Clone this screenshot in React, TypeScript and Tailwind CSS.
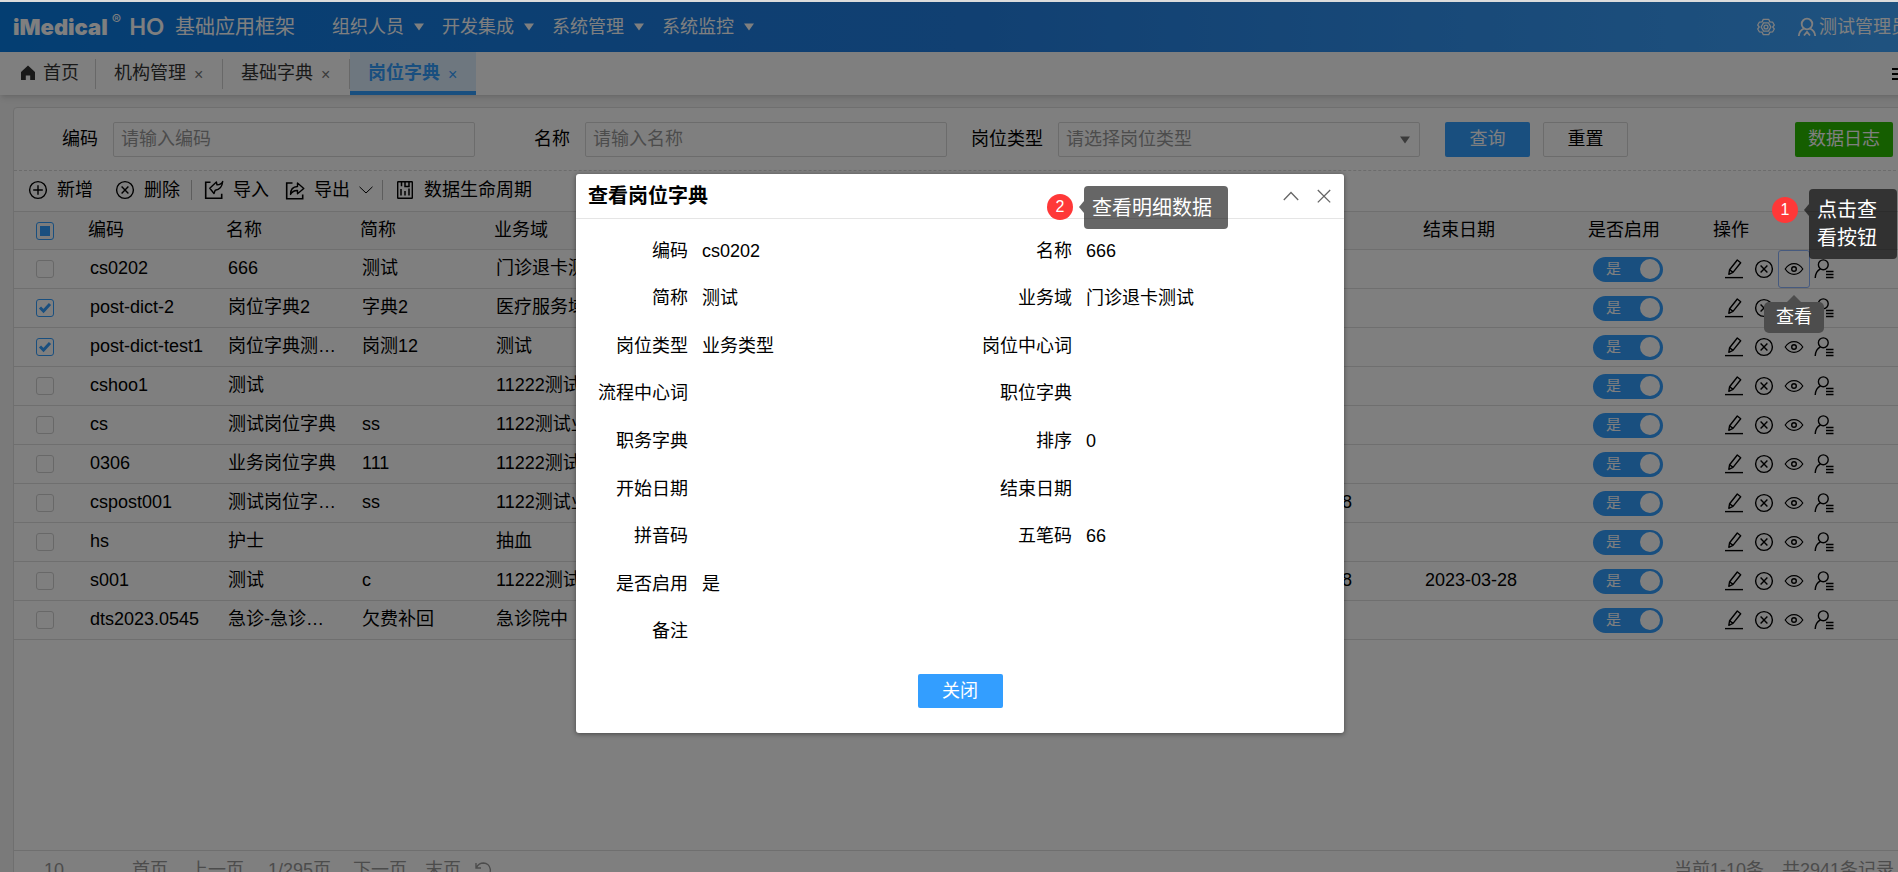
import type { ReactNode } from "react";

type Row = {
  code: string;
  name: string;
  short: string;
  domain: string;
  start?: string;
  end?: string;
  checked?: boolean;
};

const rows: Row[] = [
  { code: "cs0202", name: "666", short: "测试", domain: "门诊退卡测试" },
  { code: "post-dict-2", name: "岗位字典2", short: "字典2", domain: "医疗服务域", checked: true },
  { code: "post-dict-test1", name: "岗位字典测…", short: "岗测12", domain: "测试", checked: true },
  { code: "cshoo1", name: "测试", short: "", domain: "11222测试" },
  { code: "cs", name: "测试岗位字典", short: "ss", domain: "1122测试业" },
  { code: "0306", name: "业务岗位字典", short: "111", domain: "11222测试" },
  { code: "cspost001", name: "测试岗位字…", short: "ss", domain: "1122测试业", start: "2023-03-28" },
  { code: "hs", name: "护士", short: "", domain: "抽血" },
  { code: "s001", name: "测试", short: "c", domain: "11222测试", start: "2023-03-28", end: "2023-03-28" },
  { code: "dts2023.0545", name: "急诊-急诊…", short: "欠费补回", domain: "急诊院中" },
];

const details: [string, string][] = [
  ["编码", "cs0202"],
  ["名称", "666"],
  ["简称", "测试"],
  ["业务域", "门诊退卡测试"],
  ["岗位类型", "业务类型"],
  ["岗位中心词", ""],
  ["流程中心词", ""],
  ["职位字典", ""],
  ["职务字典", ""],
  ["排序", "0"],
  ["开始日期", ""],
  ["结束日期", ""],
  ["拼音码", ""],
  ["五笔码", "66"],
  ["是否启用", "是"],
  ["", ""],
  ["备注", ""],
];

function Icon({ children, className = "size-5" }: { children: ReactNode; className?: string }) {
  return (
    <svg
      viewBox="0 0 20 20"
      className={`${className} shrink-0`}
      fill="none"
      stroke="currentColor"
      strokeWidth="1.4"
      aria-hidden="true"
    >
      {children}
    </svg>
  );
}

const PlusCircle = () => (
  <Icon>
    <circle cx="10" cy="10" r="8.4" />
    <path d="M10 5.2v9.6M5.2 10h9.6" />
  </Icon>
);

const CrossCircle = () => (
  <Icon>
    <circle cx="10" cy="10" r="8.4" />
    <path d="M6.6 6.600l6.800 6.800M13.400 6.600l-6.800 6.800" />
  </Icon>
);

const ImportIcon = () => (
  <Icon>
    <path d="M6.500 2.200H1.700v16h16v-4.500" strokeWidth="1.600" />
    <path
      d="M18.700 1.500c-.8 2-2.600 3.200-5.700 3.400l-.6-2.900-6.600 6.200 4.200 5.300 1.200-3.300c4.200-.5 7-3.700 7.500-8.700z"
      strokeLinejoin="round"
    />
  </Icon>
);

const ExportIcon = () => (
  <Icon>
    <path d="M7.500 3H1.700v15.700h16v-4.200" strokeWidth="1.600" />
    <path
      d="M5.500 14.500c0-5 2.700-7.800 7-8V3l6.300 5.500-6.300 5.300v-3.300c-3-.2-5.300 1-7 4z"
      strokeLinejoin="round"
    />
  </Icon>
);

const LifeIcon = () => (
  <Icon>
    <rect x="2.700" y="1.700" width="14.600" height="16.600" rx="0.5" />
    <path d="M6.500 1.700v4.600M6 9v6.500M10 11v4.500M14 8.500v7M10 2v4.500h4V2" strokeWidth="1.500" />
  </Icon>
);

const EditIcon = () => (
  <Icon>
    <path d="M1 18.600h18" />
    <path d="M4.800 15.300l.8-4.600 7.700-9.700 3.400 2.700-7.700 9.700zM5.600 10.700l3.400 2.700" strokeLinejoin="round" />
  </Icon>
);

const EyeIcon = () => (
  <Icon>
    <path d="M1.200 10C3.500 6.500 6.500 4.700 10 4.700s6.500 1.800 8.800 5.300c-2.300 3.500-5.300 5.300-8.800 5.300S3.500 13.500 1.200 10z" strokeWidth="1.200" />
    <circle cx="10" cy="10" r="2.300" />
  </Icon>
);

const PersonListIcon = () => (
  <Icon>
    <circle cx="9.300" cy="5.800" r="4.900" />
    <path d="M6.500 9.800C3 11.500 1.400 14.500 1.200 19M12 12.500h7.500M12 15.500h7.500M12 18.500h7.500" />
  </Icon>
);

const Caret = () => (
  <svg viewBox="0 0 10 8" className="h-2 w-2.5" fill="currentColor" aria-hidden="true">
    <path d="M0 .5h10L5 7.500z" />
  </svg>
);

function Check({ label, checked, partial }: { label: string; checked?: boolean; partial?: boolean }) {
  const on = checked || partial;
  return (
    <label className="relative ml-[22px] flex size-[18px]">
      <input
        type="checkbox"
        aria-label={label}
        defaultChecked={checked}
        className={`size-[18px] appearance-none rounded-[3px] border ${on ? "border-[#339eff]" : "border-[#d0d0d0]"}`}
      />
      {partial && <span className="absolute inset-1 bg-[#339eff]" />}
      {checked && (
        <svg viewBox="0 0 18 18" className="absolute inset-0" fill="none" stroke="#339eff" strokeWidth="3" aria-hidden="true">
          <path d="M4 8.500L7.500 12 14 5" />
        </svg>
      )}
    </label>
  );
}

function Switch({ label }: { label: string }) {
  return (
    <label className="ml-[3px] flex h-[25px] w-[70px] items-center justify-between rounded-full bg-[#339eff] pr-[3px] pl-[13px] text-[15px] leading-5 text-white">
      <input type="checkbox" role="switch" aria-label={label} defaultChecked className="sr-only" />
      是
      <span className="size-5 rounded-full bg-white" />
    </label>
  );
}

function Note({ n, children }: { n: number; children: ReactNode }) {
  return (
    <div className="flex items-start text-left text-xl leading-7 text-white">
      <div className="flex h-[42px] shrink-0 items-center">
        <span className="flex size-[26px] items-center justify-center rounded-full bg-[#ff3838] text-base leading-none">
          {n}
        </span>
        <svg viewBox="0 0 5 12" className="ml-1.5 h-3 w-[5px]" fill="#000" fillOpacity="0.6" aria-hidden="true">
          <path d="M5 0v12L0 6z" />
        </svg>
      </div>
      {children}
    </div>
  );
}

function ActionButton({ label, children }: { label: string; children: ReactNode }) {
  return (
    <button type="button" aria-label={label} className="flex h-9 w-[30px] items-center justify-center">
      {children}
    </button>
  );
}

function Actions({ active }: { active: boolean }) {
  return (
    <div className="flex">
      <ActionButton label="修改">
        <EditIcon />
      </ActionButton>
      <ActionButton label="删除">
        <CrossCircle />
      </ActionButton>
      {active ? (
        <div className="relative">
          <div className="rounded-xs outline outline-[#8cb4ff]">
            <ActionButton label="查看">
              <EyeIcon />
            </ActionButton>
          </div>
          <div className="absolute top-11 left-1/2 z-20 flex w-[60px] -translate-x-1/2 flex-col items-center">
            <svg viewBox="0 0 14 7" className="h-[7px] w-3.5" fill="#4d4d4d" aria-hidden="true">
              <path d="M7 0l7 7H0z" />
            </svg>
            <div role="tooltip" className="flex h-[31px] w-full items-center justify-center rounded-[5px] bg-[#4d4d4d] pb-0.5 text-lg text-white">
              查看
            </div>
          </div>
          <div className="absolute -top-[62px] -left-[7px] z-20 w-[125px]">
            <Note n={1}>
              <div className="w-[88px] shrink-0 rounded-[4px] bg-black/60 px-2 py-[7px]">点击查看按钮</div>
            </Note>
          </div>
        </div>
      ) : (
        <ActionButton label="查看">
          <EyeIcon />
        </ActionButton>
      )}
      <ActionButton label="人员">
        <PersonListIcon />
      </ActionButton>
    </div>
  );
}

function TopBar() {
  return (
    <header className="flex h-[50px] shrink-0 items-center bg-linear-to-r from-[#087ce4] via-[#2280e4] to-[#40a6ff] pr-[11px] pl-[13px] text-lg text-white">
      <div className="flex h-[26px] w-[162px] items-center font-['Inter']">
        <span className="text-[22px] font-black">iMedical</span>
        <sup className="ml-1 text-sm">®</sup>
        <span className="ml-auto pr-[11px] font-['Lato'] text-[22px] font-bold">HO</span>
      </div>
      <h1 className="text-xl">基础应用框架</h1>
      <nav className="ml-[37px] flex">
        {["组织人员", "开发集成", "系统管理", "系统监控"].map((item) => (
          <button key={item} type="button" className="flex w-[110px] items-center gap-2.5">
            {item}
            <Caret />
          </button>
        ))}
      </nav>
      <button type="button" aria-label="设置" className="ml-auto">
        <Icon className="size-[18px]">
          <path
            d="M7 1.500h6l1.300 2.800 3 .2 1.900 3.300L17.500 10l1.700 2.200-1.900 3.300-3 .2-1.300 2.800H7l-1.300-2.800-3-.2-1.900-3.300L2.500 10 .8 7.800l1.900-3.300 3-.2z"
            strokeLinejoin="round"
          />
          <path d="M7.300 5.400h5.400L15.400 10l-2.700 4.600H7.300L4.600 10z" />
          <circle cx="10" cy="10" r="2.200" />
        </Icon>
      </button>
      <button type="button" className="ml-[22px] flex items-center gap-0.5">
        <Icon>
          <circle cx="10" cy="7" r="5.300" strokeWidth="1.800" />
          <path d="M7 11.500C3.800 13 2 15.500 1.800 19M13 11.500c3.200 1.500 5 4 5.200 7.500M7 18.500l3-3.500 3 3.500" strokeWidth="1.800" />
        </Icon>
        测试管理员
      </button>
    </header>
  );
}

function TabBar() {
  return (
    <nav className="flex h-[43px] shrink-0 items-center bg-white text-lg text-[#333] shadow-md">
      <a href="#home" className="flex h-[30px] w-24 items-center gap-1.5 border-r border-[#d0d0d0] pb-0.5 pl-[19px]">
        <svg viewBox="0 0 18 18" className="size-[18px]" fill="currentColor" aria-hidden="true">
          <path d="M9 1.500L16 8v8h-4.800v-4.500H6.800V16H2V8z" />
        </svg>
        首页
      </a>
      {["机构管理", "基础字典"].map((tab) => (
        <div key={tab} className="flex h-[30px] w-[127px] items-center gap-2 border-r border-[#d0d0d0] pb-0.5 pl-[18px]">
          <a href="#tab">{tab}</a>
          <button type="button" aria-label="关闭标签" className="pt-1 text-base text-[#777]">
            ×
          </button>
        </div>
      ))}
      <div className="flex h-[43px] w-[126px] items-center gap-2 border-b-4 border-[#339eff] bg-[#ddeeff] pt-0.5 pl-[18px] text-[#339eff]">
        <a href="#tab" aria-current="page" className="font-bold">
          岗位字典
        </a>
        <button type="button" aria-label="关闭标签" className="pt-1 text-base">
          ×
        </button>
      </div>
      <button type="button" aria-label="标签菜单" className="mr-3 ml-auto flex w-4 flex-col gap-[3px]">
        <span className="h-[2px] bg-black" />
        <span className="h-[2px] bg-black" />
        <span className="h-[2px] bg-black" />
      </button>
    </nav>
  );
}

function SearchForm() {
  const field = "h-[35px] w-[362px] rounded-xs border border-[#d9d9d9] bg-white px-[7px] text-lg leading-none";
  return (
    <form className="flex h-[63px] items-center border-b border-dashed border-[#d9d9d9] pr-[13px]">
      <label htmlFor="code" className="mr-[15px] w-[84px] text-right">
        编码
      </label>
      <input id="code" placeholder="请输入编码" className={`${field} placeholder:text-[#999]`} />
      <label htmlFor="name" className="mr-[15px] w-[95px] text-right">
        名称
      </label>
      <input id="name" placeholder="请输入名称" className={`${field} placeholder:text-[#999]`} />
      <label htmlFor="type" className="mr-[15px] w-24 text-right">
        岗位类型
      </label>
      <div className="relative flex">
        <select id="type" className={`${field} appearance-none text-[#999]`}>
          <option>请选择岗位类型</option>
        </select>
        <span className="pointer-events-none absolute top-[14px] right-2.5 text-[#777]">
          <Caret />
        </span>
      </div>
      <button type="button" className="ml-[25px] h-[35px] w-[85px] rounded-xs bg-[#339eff] text-white">
        查询
      </button>
      <button type="button" className="ml-[13px] h-[35px] w-[85px] rounded-xs border border-[#d9d9d9]">
        重置
      </button>
      <button type="button" className="ml-auto h-[35px] w-[98px] rounded-xs bg-[#2abc00] text-white">
        数据日志
      </button>
    </form>
  );
}

function Toolbar() {
  const item = "flex items-center gap-[9px]";
  const divider = "h-5 w-px bg-[#bbb]";
  return (
    <div className="flex h-10 items-center pb-[3px] pl-3.5">
      <button type="button" className={item}>
        <PlusCircle />
        新增
      </button>
      <button type="button" className={`${item} ml-[22px]`}>
        <CrossCircle />
        删除
      </button>
      <span className={`${divider} ml-[11px]`} />
      <button type="button" className={`${item} ml-3`}>
        <ImportIcon />
        导入
      </button>
      <button type="button" className={`${item} ml-4`}>
        <ExportIcon />
        导出
        <svg viewBox="0 0 14 8" className="h-2 w-3.5" fill="none" stroke="currentColor" aria-hidden="true">
          <path d="M.5.800L7 7l6.500-6.200" />
        </svg>
      </button>
      <span className={`${divider} ml-[9px]`} />
      <button type="button" className={`${item} ml-3`}>
        <LifeIcon />
        数据生命周期
      </button>
    </div>
  );
}

function PostTable() {
  const th = "border-y border-[#dedede] px-2.5 pt-0 pb-0.5 text-left font-normal";
  const td = "overflow-hidden border-b border-[#dedede] px-3 pt-0 pb-0.5 whitespace-nowrap";
  return (
    <table className="w-full table-fixed border-separate border-spacing-0">
      <colgroup>
        <col className="w-16" />
        <col className="w-[138px]" />
        <col className="w-[134px]" />
        <col className="w-[134px]" />
        <col />
        <col className="w-[165px]" />
        <col className="w-[165px]" />
        <col className="w-[125px]" />
        <col className="w-[203px]" />
      </colgroup>
      <thead>
        <tr className="h-[39px] bg-[#f8f8f8]">
          <th className="border-y border-[#dedede] p-0">
            <Check label="全选" partial />
          </th>
          <th className={th}>编码</th>
          <th className={th}>名称</th>
          <th className={th}>简称</th>
          <th className={th}>业务域</th>
          <th className={th}></th>
          <th className={th}>结束日期</th>
          <th className={th}>是否启用</th>
          <th className={th}>操作</th>
        </tr>
      </thead>
      <tbody>
        {rows.map((row, i) => (
          <tr key={row.code} className="h-[39px]">
            <td className="border-b border-[#dedede] p-0">
              <Check label={row.code} checked={row.checked} />
            </td>
            <td className={td}>{row.code}</td>
            <td className={td}>{row.name}</td>
            <td className={td}>{row.short}</td>
            <td className={td}>{row.domain}</td>
            <td className={td}>{row.start}</td>
            <td className={td}>{row.end}</td>
            <td className="border-b border-[#dedede] px-3 py-0">
              <Switch label="是否启用" />
            </td>
            <td className="border-b border-[#dedede] p-0 pl-4">
              <Actions active={i === 0} />
            </td>
          </tr>
        ))}
      </tbody>
    </table>
  );
}

function Pager() {
  return (
    <footer className="mt-auto flex h-[43px] items-center border-t border-[#dedede] pr-3 pb-1 pl-[30px] text-[#999]">
      <span>10</span>
      <button type="button" className="ml-[68px]">
        首页
      </button>
      <button type="button" className="ml-[22px]">
        上一页
      </button>
      <span className="ml-6">1/295页</span>
      <button type="button" className="ml-[22px]">
        下一页
      </button>
      <button type="button" className="ml-[18px]">
        末页
      </button>
      <button type="button" aria-label="刷新" className="ml-3">
        <Icon>
          <path d="M3 3v5h5M3.500 7.500C5 4.500 7.500 3 10.500 3A7 7 0 1 1 4 13" />
        </Icon>
      </button>
      <span className="ml-auto">当前1-10条</span>
      <span className="ml-[18px]">共2941条记录</span>
    </footer>
  );
}

function DetailDialog() {
  return (
    <section
      role="dialog"
      aria-labelledby="dialog-title"
      className="relative flex w-[768px] flex-col rounded-[3px] bg-white pb-[25px] shadow-[0_1px_5px_rgba(0,0,0,0.45)]"
    >
      <div className="flex h-[45px] items-center border-b border-[#e5e5e5] px-3">
        <h2 id="dialog-title" className="text-xl font-bold">
          查看岗位字典
        </h2>
        <button type="button" aria-label="收起" className="ml-auto text-[#666]">
          <svg viewBox="0 0 16 16" className="size-4" fill="none" stroke="currentColor" strokeWidth="1.300" aria-hidden="true">
            <path d="M.8 12L8 4.500l7.200 7.500" />
          </svg>
        </button>
        <button type="button" aria-label="关闭" className="ml-[17px] text-[#666]">
          <svg viewBox="0 0 16 16" className="size-4" fill="none" stroke="currentColor" strokeWidth="1.300" aria-hidden="true">
            <path d="M1.800 2l12.400 12.400M14.200 2L1.800 14.400" />
          </svg>
        </button>
      </div>
      <div className="absolute top-3 left-[471px]">
        <Note n={2}>
          <div className="rounded-[4px] bg-black/60 pt-2 pr-4 pb-[7px] pl-2 whitespace-nowrap">查看明细数据</div>
        </Note>
      </div>
      <dl className="mt-2 grid h-[428px] auto-rows-fr grid-cols-2 items-center">
        {details.map(([label, value], i) => (
          <div key={i} className="flex gap-3.5">
            <dt className="w-28 text-right">{label}</dt>
            <dd>{value}</dd>
          </div>
        ))}
      </dl>
      <button type="button" className="mt-[19px] h-[34px] w-[85px] self-center rounded-xs bg-[#339eff] text-white">
        关闭
      </button>
    </section>
  );
}

export default function App() {
  return (
    <div className="h-screen overflow-hidden bg-white font-['Liberation_Sans','Noto_Sans_CJK_SC',sans-serif] text-lg leading-6 text-black">
      <div className="relative flex h-[calc(100vh+30px)] w-[calc(100%+22px)] flex-col border-t-2 border-[#dcdcdc] bg-[#f4f4f4]">
        <TopBar />
        <TabBar />
        <main className="mx-[13px] mt-3 mb-2 flex grow flex-col rounded-[4px] border border-[#dedede] bg-white">
          <SearchForm />
          <Toolbar />
          <PostTable />
          <Pager />
        </main>
        <div className="absolute inset-0 z-10 flex items-start justify-center bg-black/50 pt-[172px]">
          <DetailDialog />
        </div>
      </div>
    </div>
  );
}
